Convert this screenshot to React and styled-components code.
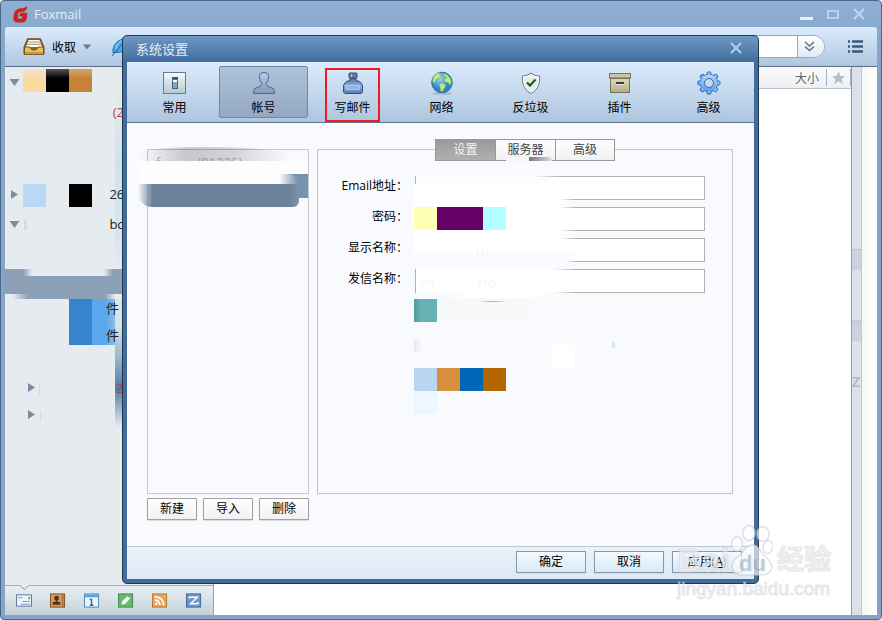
import React, { useState } from 'react';
import styled, { createGlobalStyle } from 'styled-components';

const GlobalStyle = createGlobalStyle`
  * {
    box-sizing: border-box;
  }
  body {
    margin: 0;
    font-family: 'Open Sans', 'Noto Sans CJK SC', sans-serif;
    font-size: 12px;
    color: #000;
  }
  button, input {
    font-family: inherit;
    font-size: inherit;
    color: inherit;
  }
  svg {
    display: block;
    flex: none;
  }
`;

const Window = styled.div`
  position: relative;
  display: flex;
  flex-direction: column;
  min-height: 100vh;
  padding: 0 4px 4px;
  border: 1px solid #4b6788;
  border-radius: 4px;
  background: linear-gradient(#8eafd3, #84a4ca 60px);
  overflow: hidden;
`;
const TitleBar = styled.header`
  display: flex;
  align-items: center;
  height: 26px;
  padding: 0 12px 0 8px;
  color: #e6eef7;
  font-size: 13px;
`;
const AppName = styled.span`
  flex: 1;
  margin-left: 5px;
`;
const PlainButton = styled.button`
  display: flex;
  align-items: center;
  padding: 0;
  border: 0;
  background: none;
`;
const WindowButtons = styled.div`
  display: flex;
  gap: 14px;
`;
const Toolbar = styled.div`
  display: flex;
  align-items: center;
  height: 40px;
  padding: 0 14px 0 18px;
  border-bottom: 1px solid #5d6e85;
  border-radius: 3px 3px 0 0;
  background: linear-gradient(#dbecfc, #afc6e0);
`;
const Receive = styled(PlainButton)`
  gap: 7px;
`;
const Feather = styled.span`
  flex: 1;
  margin-left: 20px;
`;
const Search = styled.div`
  display: flex;
  width: 240px;
  height: 23px;
  margin-right: 23px;
  border: 1px solid #96a8bc;
  border-radius: 0 12px 12px 0;
  background: #fff;
  overflow: hidden;
`;
const SearchInput = styled.input`
  flex: 1;
  min-width: 0;
  border: 0;
  outline: 0;
`;
const SearchMore = styled(PlainButton)`
  width: 27px;
  padding-left: 6px;
  border-left: 1px solid #96a8bc;
  background: linear-gradient(#fff, #dfe9f4);
`;
const Main = styled.main`
  display: flex;
  flex: 1;
`;
const Sidebar = styled.aside`
  position: relative;
  display: flex;
  flex-direction: column;
  width: 209px;
  border-right: 1px solid #9aa3ad;
  background: #e5ebef;
`;
const Tree = styled.div`
  flex: 1;
`;
const TreeRow = styled.div`
  display: flex;
  align-items: center;
  height: ${({ $tall }) => ($tall ? 30 : 27)}px;
  font-size: 13px;
  color: ${({ $unread }) => ($unread ? '#c23a4c' : '#222')};
`;
const TreeLead = styled.span`
  display: flex;
  width: 101px;
  padding-left: ${({ $depth }) => 4 + $depth * 17}px;
`;
const TreeText = styled.span`
  position: relative;
  z-index: 1;
`;
const TreeGap = styled.div`
  height: ${({ $size }) => $size}px;
`;
const SelectedRow = styled.div`
  height: 25px;
  background: #8ba0b6;
`;
const ModuleBar = styled.nav`
  position: relative;
  display: flex;
  align-items: center;
  gap: 18px;
  height: 30px;
  padding: 0 11px;
  border-top: 1px solid #a1adb8;
  background: linear-gradient(#e8f0f5, #c4d0d8);
`;
const Notch = styled.svg`
  position: absolute;
  left: 14px;
  top: -1px;
`;
const MailList = styled.section`
  flex: 1;
  background: #fff;
`;
const ListHeader = styled.div`
  display: flex;
  justify-content: flex-end;
  align-items: center;
  height: 22px;
  border-bottom: 1px solid #bcc3cb;
  background: linear-gradient(#fafbfc, #edf0f3);
  color: #666;
`;
const StarColumn = styled.span`
  display: flex;
  align-items: center;
  height: 17px;
  margin-left: 7px;
  padding: 0 4px;
  border: solid #9fb0c2;
  border-width: 0 1px;
`;
const IndexStrip = styled.div`
  display: grid;
  grid-template-rows: 182px 21px 50px 21px 33px 1fr;
  width: 11px;
  border: solid #8f9ba8;
  border-width: 0 1px;
  border-right-color: #c2c8cf;
  background: #dae1e8;
  color: #aab4c0;
  font-size: 14px;
  font-weight: 600;
  line-height: 16px;
`;
const IndexMark = styled.i`
  border-top: 1px solid #bec8d2;
  background: #cad2dd;
`;
const Preview = styled.div`
  width: 15px;
  background: linear-gradient(to right, #f5f8f6, #fff);
`;

const Dialog = styled.section`
  position: absolute;
  top: 34px;
  left: 121px;
  right: 122px;
  z-index: 2;
  padding: 0 4px 4px;
  border: 1px solid #22384f;
  border-radius: 5px;
  background: linear-gradient(#7098c5, #416c9c 26px);
`;
const DialogTitle = styled.div`
  display: flex;
  align-items: center;
  justify-content: space-between;
  height: 26px;
  padding: 0 12px 2px 9px;
  color: #e6eef7;
  font-size: 13px;
`;
const Categories = styled.nav`
  display: flex;
  height: 61px;
  padding: 4px 0 4px 3px;
  border-bottom: 1px solid #64758a;
  background: linear-gradient(#dbecfc, #aec5df);
`;
const Category = styled.button`
  position: relative;
  display: flex;
  flex-direction: column;
  align-items: center;
  gap: 4px;
  width: 89px;
  height: 52px;
  padding: 4px 0 0;
  border: 1px solid ${({ $active }) => ($active ? '#7288a2' : 'transparent')};
  border-radius: 2px;
  background: ${({ $active }) => ($active ? 'linear-gradient(#adc3da, #94a9c1)' : 'none')};
  line-height: 18px;
`;
const RedFrame = styled.span`
  position: absolute;
  top: 1px;
  left: 16px;
  width: 55px;
  height: 54px;
  border: 2px solid #ed1c24;
`;
const DialogBody = styled.div`
  display: flex;
  gap: 8px;
  padding: 26px 21px 26px 20px;
  background: #f9fafe;
`;
const Accounts = styled.div`
  position: relative;
  width: 162px;
`;
const AccountList = styled.div`
  height: 345px;
  margin-bottom: 4px;
  padding: 4px 8px;
  border: 1px solid #c9c9c9;
  color: #bbb;
  font-size: 13px;
  line-height: 16px;
`;
const AccountButtons = styled.div`
  display: flex;
  gap: 6px;
`;
const PushButton = styled.button`
  width: ${({ $wide }) => ($wide ? 70 : 50)}px;
  height: 22px;
  padding: 0;
  border: 1px solid ${({ $wide }) => ($wide ? '#8497ab' : '#a3a3a3')};
  background: ${({ $wide }) => ($wide ? 'linear-gradient(#f4f9fd, #d9e8f6)' : 'linear-gradient(#fff, #f1f1f1)')};
  box-shadow: 0 1px 1px #ddd;
  line-height: 20px;
`;
const Panel = styled.div`
  position: relative;
  display: flex;
  flex: 1;
  flex-direction: column;
  align-items: center;
  height: 345px;
  border: 1px solid #c4c4c8;
`;
const Tabs = styled.div`
  display: flex;
  margin-top: -11px;
  border: 1px solid #999;
`;
const Tab = styled.button`
  width: 60px;
  height: 20px;
  padding: 0;
  border: 0;
  border-right: 1px solid #999;
  background: ${({ $active }) => ($active ? 'linear-gradient(#9a9a9a, #b0b0b0)' : 'linear-gradient(#fdfdfd, #f2f2f2)')};
  color: ${({ $active }) => ($active ? '#f4f4f4' : '#444')};
  line-height: 20px;
  &:last-child {
    width: 58px;
    border-right: 0;
  }
`;
const Form = styled.form`
  display: grid;
  grid-template-columns: 90px 1fr;
  gap: 7px;
  align-self: stretch;
  margin-top: 15px;
  padding-right: 27px;
`;
const Label = styled.label`
  text-align: right;
  line-height: 20px;
`;
const Field = styled.input`
  width: 100%;
  min-width: 0;
  height: 24px;
  border: 1px solid #b0b0b0;
  background: #fff;
  outline: 0;
`;
// hides private data, placed freely over whatever lies below
const Patch = styled.i`
  position: absolute;
  left: ${({ $x }) => $x}px;
  top: ${({ $y }) => $y}px;
  width: ${({ $w }) => $w || 23}px;
  height: ${({ $h }) => $h || 23}px;
  background: ${({ $fill }) => $fill};
  border-radius: ${({ $round }) => $round || 0};
  pointer-events: none;
`;
const Residue = styled.span`
  position: absolute;
  left: ${({ $x }) => $x}px;
  top: ${({ $y }) => $y}px;
  color: #f5f5f7;
  font-size: 13px;
  line-height: 14px;
`;
const DialogFooter = styled.footer`
  display: flex;
  justify-content: flex-end;
  gap: 8px;
  height: 33px;
  padding: 4px 12px 0;
  border-top: 1px solid #bfc6d0;
  background: linear-gradient(#e9f3fb, #dde9f5);
`;
const Watermark = styled.div`
  position: absolute;
  right: 46px;
  bottom: 18px;
  z-index: 3;
  width: 158px;
  color: rgba(255, 255, 255, 0.5);
  font-family: 'Liberation Sans', 'Noto Sans CJK SC', sans-serif;
  -webkit-text-stroke: 1px rgba(205, 209, 213, 0.4);
  text-shadow: 0 0 1px rgba(190, 196, 202, 0.5);
  pointer-events: none;
`;
const WatermarkTop = styled.div`
  display: flex;
  align-items: flex-end;
  height: 52px;
  font-weight: bold;
`;
const Bai = styled.span`
  width: 54px;
  font-size: 34px;
  line-height: 34px;
`;
const Jingyan = styled.span`
  margin-left: 4px;
  font-size: 27px;
  line-height: 33px;
  white-space: nowrap;
`;
const PawBox = styled.span`
  position: relative;
  width: 42px;
`;
const Du = styled.span`
  position: absolute;
  left: 8px;
  bottom: 2px;
  color: rgba(120, 155, 190, 0.5);
  font-size: 22px;
  line-height: 22px;
  text-shadow: none;
`;
const Site = styled.div`
  font-size: 19px;
  line-height: 24px;
`;

const FoxLogo = () => (
  <svg width="16" height="17" viewBox="0 0 16 17">
    <path
      d="M13.500 0.500C12.500 2.500 10 2.200 7 2.700C3 3.500 1.300 5.500 1 9.500L0.800 12.500C0.800 15.500 2.500 16.300 6 16.200H9C12 16 13.300 14.500 13.500 11.500L13.800 7H7.800L6.400 10H9.600L9.400 12C9.300 12.800 9 13 8 13H6C4.900 13 4.500 12.600 4.600 11.500L4.800 8.500C5 6.600 6 5.800 8 5.700C12 5.400 14 4 13.500 0.500Z"
      fill="#dc2010"
      stroke="#b0170b"
      strokeWidth="0.5"
    />
  </svg>
);
const Cross = ({ color }) => (
  <svg width="12" height="12" viewBox="0 0 12 12">
    <path d="M1 1L11 11M11 1L1 11" stroke={color} strokeWidth="2.2" />
  </svg>
);
const TrayIcon = () => (
  <svg width="22" height="18" viewBox="0 0 22 18">
    <path d="M4.5 0.8H17.5L21 9V16.2H1V9Z" fill="#8f6527" stroke="#6e4a17" />
    <path d="M5.5 2H16.5L19 9H3Z" fill="#fff" />
    <path d="M5 4H17M4 6.3H18" stroke="#a78a62" />
    <path d="M1.5 9H7C7.5 11.5 9 12 11 12S14.500 11.500 15 9H20.500V16H1.500Z" fill="#e3c067" stroke="#7a541c" />
    <path d="M2 14H20V16H2Z" fill="#c89b3c" />
  </svg>
);
const FeatherIcon = () => (
  <svg width="22" height="22" viewBox="0 0 22 22">
    <path d="M2 17C1 9 7 2 18 2C18 11 13 17 5 16.500Z" fill="#4aa7e6" stroke="#1d6fb4" />
    <path d="M1 20L12 7" stroke="#20649c" fill="none" />
    <path d="M5 13C5 8 10 4 15 3" stroke="#a5dafa" fill="none" />
  </svg>
);
const Triangle = ({ down }) => (
  <svg width="11" height="11" viewBox="0 0 11 11">
    <path d={down ? 'M0.500 2H10.500L5.500 9Z' : 'M2 1V10L9 5.500Z'} fill="#7b8da2" />
  </svg>
);
const ListIcon = () => (
  <svg width="15" height="13" viewBox="0 0 15 13">
    <path d="M0 1.500H2M4 1.500H15M0 6.500H2M4 6.500H15M0 11.500H2M4 11.500H15" stroke="#3f5a78" strokeWidth="2.600" />
  </svg>
);

const GeneralIcon = () => (
  <svg width="24" height="24" viewBox="0 0 24 24">
    <defs>
      <linearGradient id="general" x2="0" y2="1">
        <stop stopColor="#f8f9f8" />
        <stop offset="1" stopColor="#b7c9cf" />
      </linearGradient>
    </defs>
    <rect x="0.500" y="1.500" width="22" height="21" fill="url(#general)" stroke="#627b99" />
    <rect x="9.500" y="6.500" width="5" height="11" fill="#8ea2b0" stroke="#46658a" />
    <path d="M10 7.500H14" stroke="#294a72" strokeWidth="2" />
    <path d="M10 10H14" stroke="#fff" strokeWidth="2" />
  </svg>
);
const UserIcon = () => (
  <svg width="24" height="24" viewBox="0 0 24 24">
    <defs>
      <linearGradient id="bust" x2="0" y2="1">
        <stop stopColor="#b5ccec" />
        <stop offset="1" stopColor="#8399be" />
      </linearGradient>
    </defs>
    <path
      d="M12 1.500C8.500 1.500 7 4 7.500 7C7.700 9 8.500 10.500 9.500 11.500C10 13 9.500 14.500 8 15.500L3 17.500C1.500 18.500 1.500 20 1.500 22.500H22.500C22.500 20 22.500 18.500 21 17.500L16 15.500C14.500 14.500 14 13 14.500 11.500C15.500 10.500 16.300 9 16.500 7C17 4 15.500 1.500 12 1.500Z"
      fill="url(#bust)"
      stroke="#4e658b"
    />
  </svg>
);
const InkIcon = () => (
  <svg width="24" height="24" viewBox="0 0 24 24">
    <defs>
      <linearGradient id="ink" x2="0" y2="1">
        <stop stopColor="#4f6992" />
        <stop offset="0.500" stopColor="#8bb1df" />
        <stop offset="1" stopColor="#5b7dae" />
      </linearGradient>
    </defs>
    <path d="M9 7H15V9.500C18 10 20 11 21 13.500L21.500 15V20Q21.500 22.500 19 22.500H5Q2.500 22.500 2.500 20V15L3 13.500C4 11 6 10 9 9.500Z" fill="url(#ink)" stroke="#334e78" />
    <rect x="8" y="2" width="8" height="5" rx="1" fill="#657da3" stroke="#344b70" />
    <path d="M10.500 3V6.500" stroke="#a9bdd9" />
    <rect x="5.500" y="14.500" width="13" height="4" fill="#90b6e5" stroke="#a8c8ee" />
  </svg>
);
const GlobeIcon = () => (
  <svg width="24" height="24" viewBox="0 0 24 24">
    <defs>
      <radialGradient id="globe" cx="0.400" cy="0.300">
        <stop stopColor="#9ed5fb" />
        <stop offset="1" stopColor="#2f7fd0" />
      </radialGradient>
    </defs>
    <ellipse cx="12" cy="22.500" rx="10" ry="1.300" fill="#7d9abb" opacity="0.500" />
    <circle cx="12" cy="11.500" r="10.300" fill="url(#globe)" stroke="#3267a5" />
    <path
      d="M5 4C7 2 9 1.500 10.500 2L9.500 4L12 5L9 7.500L6 8.500L5 12L2.500 10.500C2.500 8 3.500 5.500 5 4ZM9 12.500L13 12L16 14.500L14.500 17L12.500 20.500L10.500 20L10 16.500ZM14 2.500C18 3.500 21 7 21.500 11L20 14.500L18 11.500L15 11L14 8.500L16.500 6.500L13.500 5Z"
      fill="#b6ec82"
      stroke="#68b058"
      strokeWidth="0.700"
    />
  </svg>
);
const ShieldIcon = () => (
  <svg width="24" height="24" viewBox="0 0 24 24">
    <path
      d="M12 2C9.500 4 6.500 5 3.500 5C2.800 11 4 18 12 22.500C20 18 21.200 11 20.500 5C17.500 5 14.500 4 12 2Z"
      fill="#e5ede9"
      stroke="#65768a"
    />
    <path d="M12 3.600C10 5.200 7 6 4.600 6.100C4.300 11.500 5.500 17 12 21.200C18.500 17 19.700 11.500 19.400 6.100C17 6 14 5.200 12 3.600Z" fill="none" stroke="#fff" />
    <path d="M8 11.500L11 14.500L16.500 8.500" fill="none" stroke="#16502b" strokeWidth="2" />
  </svg>
);
const BoxIcon = () => (
  <svg width="24" height="24" viewBox="0 0 24 24">
    <defs>
      <linearGradient id="box" x2="0" y2="1">
        <stop stopColor="#ddd8bd" />
        <stop offset="1" stopColor="#b3ad86" />
      </linearGradient>
    </defs>
    <rect x="2.500" y="7.500" width="19" height="14" fill="url(#box)" stroke="#77725a" />
    <rect x="1.500" y="2.500" width="21" height="4.500" fill="#cbc6a6" stroke="#77725a" />
    <rect x="8" y="11" width="8" height="2" fill="#3d3d30" />
    <path d="M8 13.500H16" stroke="#eee9d4" />
  </svg>
);
const GearIcon = () => (
  <svg width="24" height="24" viewBox="0 0 24 24">
    <defs>
      <linearGradient id="gear" x2="0" y2="1">
        <stop stopColor="#b4d8fc" />
        <stop offset="1" stopColor="#559df0" />
      </linearGradient>
    </defs>
    <g fill="url(#gear)" stroke="#2f69b3">
      {[0, 45, 90, 135].map(a => (
        <rect key={a} x="10" y="1" width="4" height="22" rx="1" transform={`rotate(${a} 12 12)`} />
      ))}
    </g>
    <circle cx="12" cy="12" r="8.800" fill="url(#gear)" stroke="#2f69b3" strokeWidth="0.800" />
    <g fill="#84baf5">
      {[0, 45, 90, 135].map(a => (
        <rect key={a} x="10.600" y="2" width="2.800" height="20" transform={`rotate(${a} 12 12)`} />
      ))}
    </g>
    <circle cx="12" cy="12" r="8" fill="url(#gear)" />
    <circle cx="12" cy="12" r="4.500" fill="#c6daef" stroke="#3c6da9" />
  </svg>
);

const categories = [
  { name: '常用', Icon: GeneralIcon },
  { name: '帐号', Icon: UserIcon },
  { name: '写邮件', Icon: InkIcon, framed: true },
  { name: '网络', Icon: GlobeIcon },
  { name: '反垃圾', Icon: ShieldIcon },
  { name: '插件', Icon: BoxIcon },
  { name: '高级', Icon: GearIcon }
];

const modules = [
  {
    name: 'mail',
    icon: (
      <>
        <rect x="0.500" y="2.500" width="16" height="12" fill="#eef4fa" stroke="#58779d" />
        <path d="M2 5.500H7M7 9.500H15M5 12.500H15" stroke="#7f98b8" />
        <rect x="13" y="5" width="2" height="2" fill="#3fa873" />
      </>
    )
  },
  {
    name: 'contacts',
    icon: (
      <>
        <rect x="0.500" y="1.500" width="15" height="14" fill="#d29a5c" stroke="#7c4d20" />
        <path d="M13.500 2V15" stroke="#8a5a2c" />
        <circle cx="7" cy="6" r="2.500" fill="#5a3010" />
        <path d="M6 8H8V10H11V13H3V10H6Z" fill="#5a3010" />
      </>
    )
  },
  {
    name: 'calendar',
    icon: (
      <>
        <rect x="0.500" y="1.500" width="15" height="14" fill="#edf5fb" stroke="#4b82b5" />
        <path d="M1 3.500H15" stroke="#52a5ea" strokeWidth="3" />
        <path d="M6 7.500H8V13M6 13.500H10" stroke="#286c99" strokeWidth="1.500" fill="none" />
      </>
    )
  },
  {
    name: 'notes',
    icon: (
      <>
        <rect x="0.500" y="1.500" width="15" height="14" fill="#6ab96b" stroke="#3f8a48" />
        <path d="M4 13L4.500 9.500L10 4L13 6.500L7.500 12Z" fill="#fff" />
      </>
    )
  },
  {
    name: 'rss',
    icon: (
      <>
        <rect x="0.500" y="1.500" width="15" height="14" fill="#eaa45c" stroke="#b8762f" />
        <circle cx="4.500" cy="12" r="1.500" fill="#fff" />
        <path d="M3 8Q8 8 8.500 13.500M3 4.500Q12 5 12.500 13.500" stroke="#fff" strokeWidth="1.800" fill="none" />
      </>
    )
  },
  {
    name: 'sync',
    icon: (
      <>
        <rect x="0.500" y="1.500" width="15" height="14" fill="#6d96c7" stroke="#3d6798" />
        <path d="M3.500 6.500V5H12L5 12H12.500V10" stroke="#fff" strokeWidth="1.600" fill="none" />
      </>
    )
  }
];

const fields = [
  { id: 'email', label: 'Email地址：', type: 'text' },
  { id: 'password', label: '密码：', type: 'password' },
  { id: 'display', label: '显示名称：', type: 'text' },
  { id: 'sender', label: '发信名称：', type: 'text' }
];

const formPatches = [
  { x: 98, y: 26, w: 146, h: 8, fill: 'linear-gradient(to right, #fcfdff 80%, transparent)' },
  { x: 95, y: 34, w: 163, h: 69, fill: 'linear-gradient(to right, #fff 90%, transparent)' },
  { x: 95, y: 103, w: 163, h: 10, fill: 'linear-gradient(to right, #f9fafe 95%, transparent)' },
  { x: 98, y: 119, w: 160, h: 24, fill: 'linear-gradient(to right, #fff 85%, transparent)' },
  { x: 130, y: 142, w: 120, h: 6, fill: 'linear-gradient(to right, transparent, #fff 20%, #fff 60%, transparent)' },
  { x: 96, y: 57, fill: '#ffffb3' },
  { x: 119, y: 57, w: 46, fill: '#660066' },
  { x: 165, y: 57, fill: '#b3ffff' },
  { x: 96, y: 149, fill: 'linear-gradient(to right, #4f9a9b, #66b2b2 30%)' },
  { x: 119, y: 149, w: 92, fill: '#f7f8f8' },
  { x: 160, y: 151, w: 30, h: 1, fill: 'linear-gradient(to right, transparent, #aaa, transparent)' },
  { x: 96, y: 189, w: 8, h: 12, fill: 'linear-gradient(to right, #e4e9ef, transparent)' },
  { x: 234, y: 195, fill: '#fff' },
  { x: 294, y: 192, w: 3, h: 6, fill: '#dbe4f0' },
  { x: 96, y: 218, fill: '#b8d6f0' },
  { x: 119, y: 218, fill: '#d68f3a' },
  { x: 142, y: 218, fill: '#0066b5' },
  { x: 165, y: 218, fill: '#b36600' },
  { x: 96, y: 241, fill: '#eef6ff' },
  { x: 211, y: 7, w: 23, h: 4, fill: 'linear-gradient(to right, #777, #ddd)', round: '0 12px 0 0' },
  { x: 188, y: 7, w: 23, h: 5, fill: '#f6f7f8' }
];

const accountPatches = [
  { x: -7, y: -2, w: 150, h: 14, fill: 'linear-gradient(to right, transparent, rgba(0, 0, 0, 0.2) 30%, rgba(0, 0, 0, 0.16) 60%, transparent)', round: '50% 70% 0 0' },
  { x: 120, y: 25, w: 41, h: 24, fill: '#7892ae' },
  { x: -9, y: 12, w: 170, h: 13, fill: '#fdfdfe' },
  { x: -9, y: 25, w: 160, h: 10, fill: 'linear-gradient(to right, #fdfdfe 88%, transparent)', round: '0 12px 0 0' },
  { x: -9, y: 35, w: 161, h: 23, fill: 'linear-gradient(to right, transparent, #6b829a 9%, #6b829a 94%, #7f94aa)', round: '0 0 6px 14px' }
];

const sidebarPatches = [
  { x: 18, y: 2, fill: 'linear-gradient(#eee3d0, #fbd8a0 50%)' },
  { x: 41, y: 2, fill: 'linear-gradient(#555, #000 40%)' },
  { x: 64, y: 2, fill: 'linear-gradient(#d3a570, #c68536 40%)' },
  { x: 18, y: 117, fill: '#b8d9f5' },
  { x: 64, y: 117, fill: '#000' },
  { x: 18, y: 202, w: 90, h: 7, fill: 'linear-gradient(to right, transparent, #e5ebef 10%, #e5ebef 90%, transparent)' },
  { x: 8, y: 227, w: 102, h: 5, fill: 'linear-gradient(to right, transparent, #8ba0b6 15%, #8ba0b6 90%, transparent)' },
  { x: 64, y: 232, h: 46, fill: '#3584cd' },
  { x: 87, y: 232, h: 46, fill: 'linear-gradient(to right, #5aa7ee 60%, #8bbce8)' },
  { x: 19, y: 153, w: 4, h: 10, fill: 'linear-gradient(to right, #c9d7e2, transparent)' },
  { x: 34, y: 316, w: 8, h: 12, fill: 'linear-gradient(to right, #d8cfc9, #eee6e4 20%, transparent)' },
  { x: 35, y: 344, w: 8, h: 11, fill: 'linear-gradient(to right, #e0d3c6, #eae8e5 20%, transparent)' },
  {
    x: 110,
    y: 20,
    w: 7,
    h: 182,
    fill: 'linear-gradient(transparent, #cfe4e8 40%, #d5e6ea 80%, transparent)'
  },
  {
    x: 110,
    y: 232,
    w: 7,
    h: 128,
    fill: 'linear-gradient(#d5e6ea 20%, #9bb8cd 45%, #527aa8 70%, transparent)'
  }
];

const Patches = ({ items }) =>
  items.map(({ x, y, w, h, fill, round }) => (
    <Patch key={`${x}-${y}`} $x={x} $y={y} $w={w} $h={h} $fill={fill} $round={round} />
  ));

const FolderTree = () => (
  <Sidebar>
    <Patches items={sidebarPatches} />
    <Tree>
      <TreeRow $tall>
        <TreeLead $depth={0}>
          <Triangle down />
        </TreeLead>
      </TreeRow>
      <TreeRow $tall $unread>
        <TreeLead $depth={0} />
        <TreeText>&nbsp;&nbsp;(2</TreeText>
      </TreeRow>
      <TreeGap $size={52} />
      <TreeRow $tall>
        <TreeLead $depth={0}>
          <Triangle />
        </TreeLead>
        <TreeText>&nbsp;26</TreeText>
      </TreeRow>
      <TreeRow $tall>
        <TreeLead $depth={0}>
          <Triangle down />
        </TreeLead>
        <TreeText>&nbsp;bc</TreeText>
      </TreeRow>
      <TreeGap $size={30} />
      <SelectedRow />
      <TreeRow>
        <TreeLead $depth={0} />
        <TreeText>件</TreeText>
      </TreeRow>
      <TreeRow>
        <TreeLead $depth={0} />
        <TreeText>件</TreeText>
      </TreeRow>
      <TreeGap $size={26} />
      <TreeRow $unread>
        <TreeLead $depth={1}>
          <Triangle />
        </TreeLead>
        <TreeText>&nbsp;&nbsp;&nbsp;2</TreeText>
      </TreeRow>
      <TreeRow>
        <TreeLead $depth={1}>
          <Triangle />
        </TreeLead>
      </TreeRow>
    </Tree>
    <ModuleBar>
      <Notch width="11" height="6" viewBox="0 0 11 6">
        <path d="M0 0H11L5.500 5Z" fill="#e5ebef" />
        <path d="M0.500 0L5.500 4.500L10.500 0" fill="none" stroke="#8d9aa7" />
      </Notch>
      {modules.map(({ name, icon }) => (
        <PlainButton key={name} aria-label={name}>
          <svg width="16" height="17" viewBox="0 0 17 17">
            {icon}
          </svg>
        </PlainButton>
      ))}
    </ModuleBar>
  </Sidebar>
);

const SettingsDialog = () => {
  const [category, setCategory] = useState('帐号');
  const [tab, setTab] = useState('设置');

  return (
    <Dialog role="dialog" aria-label="系统设置">
      <DialogTitle>
        系统设置
        <PlainButton aria-label="关闭">
          <Cross color="#b4cae2" />
        </PlainButton>
      </DialogTitle>

      <Categories>
        {categories.map(({ name, Icon, framed }) => (
          <Category key={name} $active={category === name} onClick={() => setCategory(name)}>
            <Icon />
            {name}
            {framed && <RedFrame />}
          </Category>
        ))}
      </Categories>

      <DialogBody>
        <Accounts>
          <AccountList>f&nbsp;&nbsp;&nbsp;&nbsp;&nbsp;&nbsp;&nbsp;&nbsp;&nbsp;&nbsp;&nbsp;(01226)</AccountList>
          <Patches items={accountPatches} />
          <AccountButtons>
            <PushButton>新建</PushButton>
            <PushButton>导入</PushButton>
            <PushButton>删除</PushButton>
          </AccountButtons>
        </Accounts>

        <Panel>
          <Tabs>
            {['设置', '服务器', '高级'].map(name => (
              <Tab key={name} $active={tab === name} onClick={() => setTab(name)}>
                {name}
              </Tab>
            ))}
          </Tabs>
          <Form onSubmit={e => e.preventDefault()}>
            {fields.map(({ id, label, type }) => (
              <React.Fragment key={id}>
                <Label htmlFor={id}>{label}</Label>
                <Field id={id} type={type} />
              </React.Fragment>
            ))}
          </Form>
          <Patches items={formPatches} />
          <Residue $x={158} $y={94}>
            (zl
          </Residue>
          <Residue $x={102} $y={125}>
            zh
          </Residue>
          <Residue $x={160} $y={125}>
            tro
          </Residue>
        </Panel>
      </DialogBody>

      <DialogFooter>
        <PushButton $wide>确定</PushButton>
        <PushButton $wide>取消</PushButton>
        <PushButton $wide>
          应用(<u>A</u>)
        </PushButton>
      </DialogFooter>
    </Dialog>
  );
};

const BaiduMark = () => (
  <Watermark>
    <WatermarkTop>
      <Bai>Bai</Bai>
      <PawBox>
        <svg width="42" height="52" viewBox="0 0 42 52">
          <g fill="rgba(255,255,255,0.65)" stroke="rgba(200,204,208,0.6)" strokeWidth="1.500">
            <ellipse cx="6" cy="19" rx="5.500" ry="7" />
            <ellipse cx="18" cy="8" rx="6" ry="7.500" />
            <ellipse cx="32" cy="9" rx="6" ry="7.500" />
            <ellipse cx="37" cy="22" rx="5" ry="6.500" transform="rotate(12 37 22)" />
            <path d="M21 20C15 20 13 27 8 31C2 35 0 40 2 45C4 51 10 50 21 50C32 50 37 51 40 45C42 40 39 36 34 31C29 27 28 20 21 20Z" />
          </g>
        </svg>
        <Du>du</Du>
      </PawBox>
      <Jingyan>经验</Jingyan>
    </WatermarkTop>
    <Site>jingyan.baidu.com</Site>
  </Watermark>
);

const App = () => (
  <Window>
    <GlobalStyle />
    <TitleBar>
      <FoxLogo />
      <AppName>Foxmail</AppName>
      <WindowButtons>
        <PlainButton aria-label="最小化">
          <svg width="13" height="12" viewBox="0 0 13 12">
            <path d="M0 10.500H13" stroke="#e9f2fb" strokeWidth="3" />
          </svg>
        </PlainButton>
        <PlainButton aria-label="最大化">
          <svg width="12" height="12" viewBox="0 0 12 12">
            <rect x="1" y="3" width="10" height="7" fill="none" stroke="#b9d0e9" strokeWidth="2" />
          </svg>
        </PlainButton>
        <PlainButton aria-label="关闭">
          <Cross color="#bfd5ec" />
        </PlainButton>
      </WindowButtons>
    </TitleBar>

    <Toolbar>
      <Receive>
        <TrayIcon />
        收取
        <svg width="8" height="6" viewBox="0 0 8 6">
          <path d="M0 0.500H8L4 5.500Z" fill="#5f7a9c" />
        </svg>
      </Receive>
      <Feather>
        <FeatherIcon />
      </Feather>
      <Search>
        <SearchInput aria-label="搜索" />
        <SearchMore aria-label="更多">
          <svg width="11" height="11" viewBox="0 0 11 11">
            <path d="M1 1L5.500 5L10 1M1 5.500L5.500 9.500L10 5.500" fill="none" stroke="#62738a" strokeWidth="1.600" />
          </svg>
        </SearchMore>
      </Search>
      <PlainButton aria-label="菜单">
        <ListIcon />
      </PlainButton>
    </Toolbar>

    <Main>
      <FolderTree />
      <MailList>
        <ListHeader>
          大小
          <StarColumn>
            <svg width="15" height="14" viewBox="0 0 15 14">
              <path d="M7.500 0.500L9.500 5H14L10.500 8.200L12 13L7.500 10.300L3 13L4.500 8.200L1 5H5.500Z" fill="#b4bfca" />
            </svg>
          </StarColumn>
        </ListHeader>
      </MailList>
      <IndexStrip>
        <span />
        <IndexMark />
        <span />
        <IndexMark />
        <span />
        <span>Z</span>
      </IndexStrip>
      <Preview />
    </Main>

    <SettingsDialog />
    <BaiduMark />
  </Window>
);

export default App;
